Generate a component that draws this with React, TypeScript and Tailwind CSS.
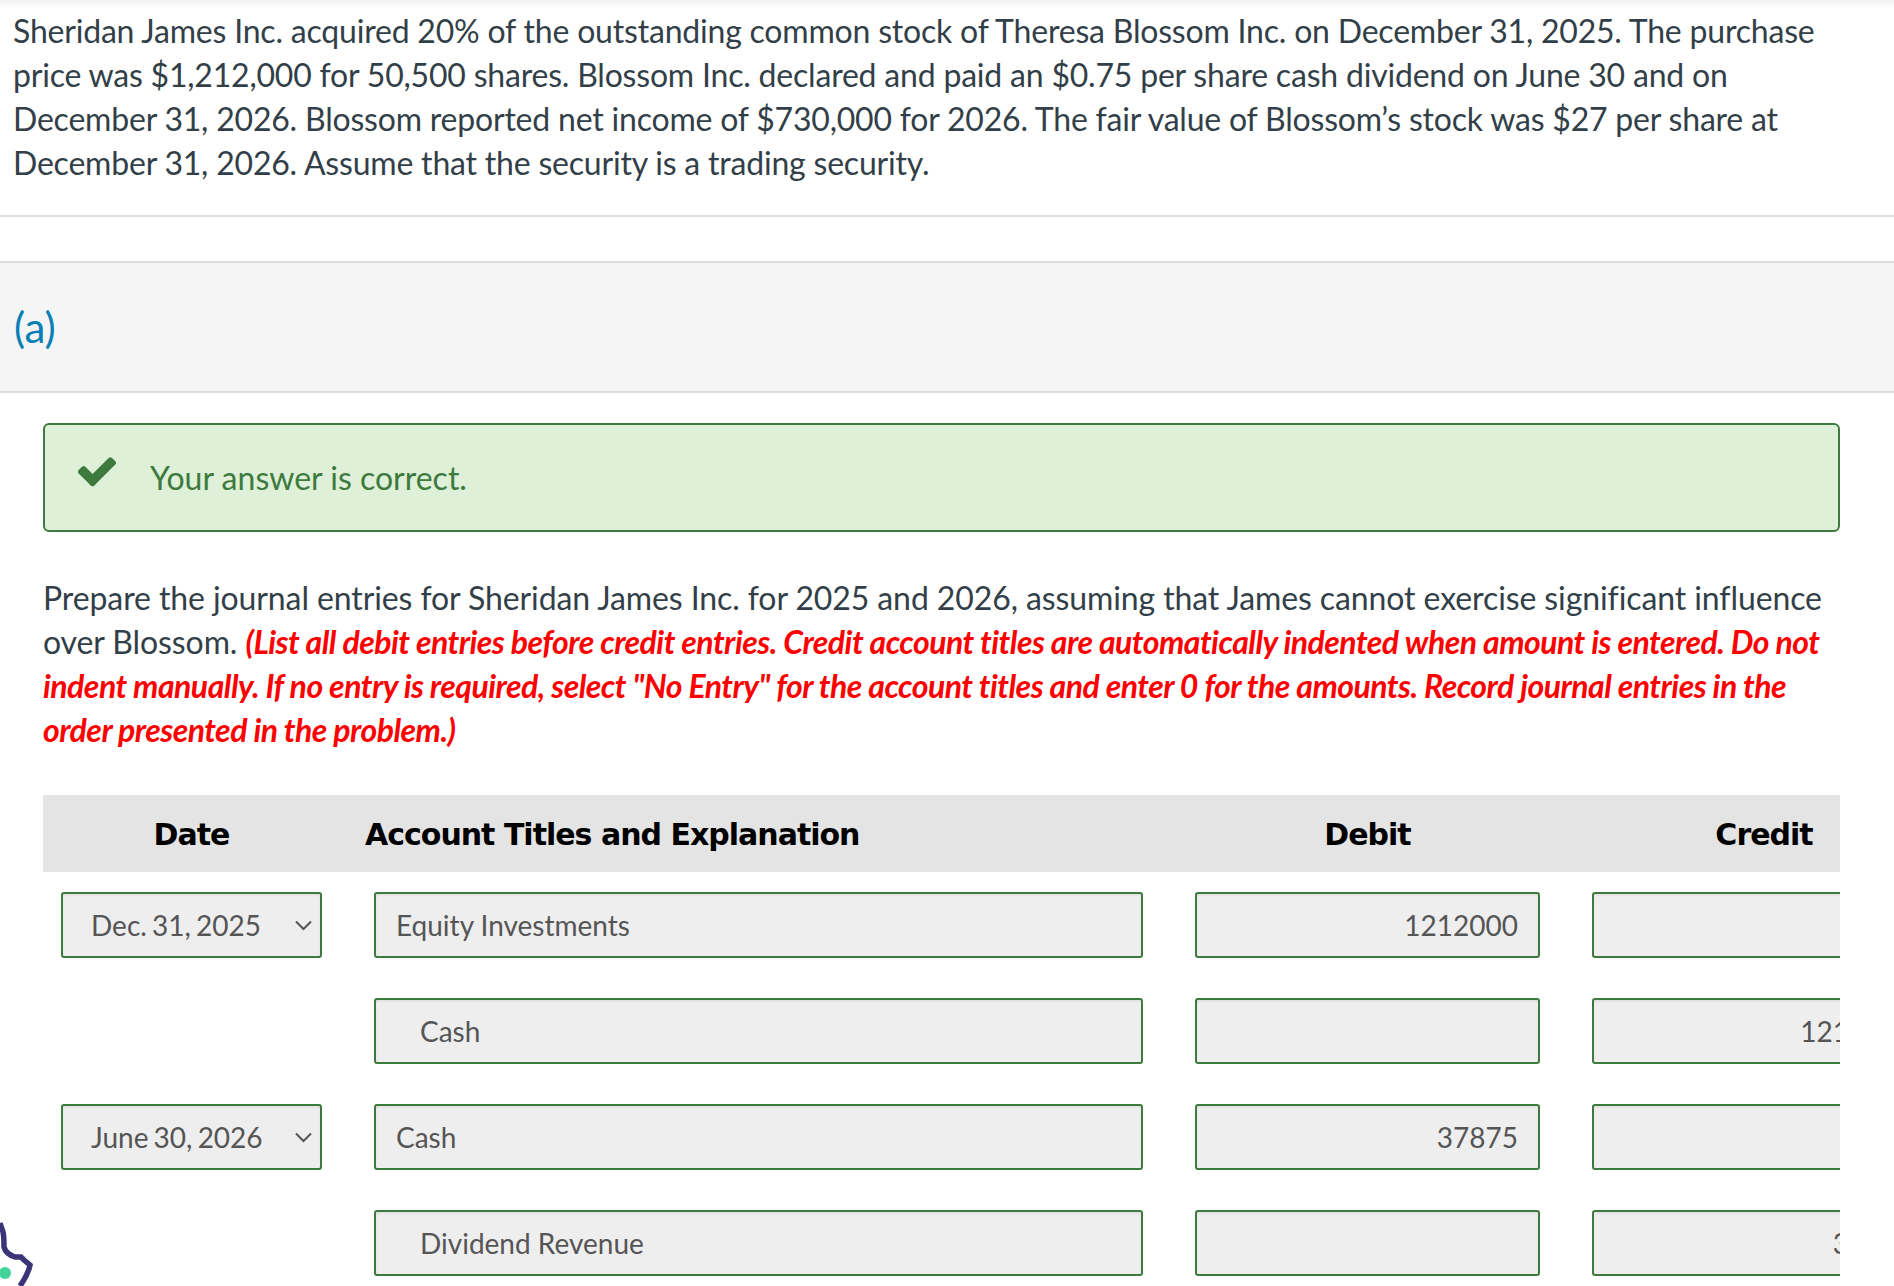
const FONT = "font-['Lato','Noto_Sans',sans-serif]"

const rows = [
  { date: "Dec. 31, 2025", account: "Equity Investments", debit: "1212000", credit: "" },
  { date: "", account: "Cash", debit: "", credit: "1212000" },
  { date: "June 30, 2026", account: "Cash", debit: "37875", credit: "" },
  { date: "", account: "Dividend Revenue", debit: "", credit: "37875" },
]

const FIELD =
  "h-[66px] border-2 border-[#3e7a3e] bg-[#eeeeee] rounded-[3px] text-[#555555] text-[28px] outline-none shadow-[inset_0_2px_2px_rgba(0,0,0,0.05)]"

function DateSelect({ value }: { value: string }) {
  if (!value) return <div className="w-[261px] shrink-0" />
  return (
    <div className={`${FIELD} w-[261px] shrink-0 flex items-center justify-between pl-[28px] pr-[8px]`}>
      <span className="[word-spacing:-2px]">{value}</span>
      <svg width="17" height="11" viewBox="0 0 17 11" fill="none" stroke="#555555" strokeWidth="2">
        <path d="M1 1.5 L8.5 9 L16 1.5" />
      </svg>
    </div>
  )
}

export default function App() {
  return (
    <div className={`relative h-[1286px] overflow-hidden bg-white ${FONT} text-[#333f48]`}>
      {/* top shadow */}
      <div className="h-[9px] bg-gradient-to-b from-[#f2f2f2] to-white" />

      <p className="pl-[13px] pr-[20px] text-[32px] leading-[44px] tracking-[-0.2px]">
        Sheridan James Inc. acquired 20% of the outstanding common stock of Theresa Blossom Inc. on December 31, 2025. The purchase
        price was $1,212,000 for 50,500 shares. Blossom Inc. declared and paid an $0.75 per share cash dividend on June 30 and on
        December 31, 2026. Blossom reported net income of $730,000 for 2026. The fair value of Blossom’s stock was $27 per share at
        December 31, 2026. Assume that the security is a trading security.
      </p>

      <div className="mt-[30px] border-t-2 border-[#dddddd]" />

      {/* Part heading */}
      <div className="mt-[44px] h-[132px] flex items-center border-y-2 border-[#dddddd] bg-[#f5f5f5] px-[14px]">
        <span className="text-[42px] text-[#0a7fb5]">(a)</span>
      </div>

      {/* Correct answer alert */}
      <div className="mx-[43px] w-[1797px] mt-[30px] h-[109px] flex items-center border-2 border-[#3e7a3e] rounded-[6px] bg-[#dff0d8] text-[#3e7a3e]">
        <svg className="ml-[30px] mb-[14px] w-[44px] h-[44px]" viewBox="0 0 1792 1792" fill="#3e7a3e">
          <path d="M1671 566q0 40-28 68l-724 724-136 136q-28 28-68 28t-68-28l-136-136-362-362q-28-28-28-68t28-68l136-136q28-28 68-28t68 28l294 295 656-657q28-28 68-28t68 28l136 136q28 28 28 68z" />
        </svg>
        <span className="ml-[31px] text-[32px]">Your answer is correct.</span>
      </div>

      <p className="mx-[43px] w-[1810px] mt-[44px] text-[32px] leading-[44px] tracking-[-0.1px]">
        Prepare the journal entries for Sheridan James Inc. for 2025 and 2026, assuming that James cannot exercise significant influence
        over Blossom.{" "}
        <span className="font-bold italic text-[#ff0000] tracking-[-0.53px]">
          (List all debit entries before credit entries. Credit account titles are automatically indented when amount is entered. Do not
          indent manually. If no entry is required, select "No Entry" for the account titles and enter 0 for the amounts. Record journal entries in the
          order presented in the problem.)
        </span>
      </p>

      {/* Journal table */}
      <div className="ml-[43px] w-[1797px] mt-[43px] overflow-hidden">
        <div className="h-[77px] flex items-center gap-[52px] pl-[18px] pt-[2px] bg-[#e4e4e4] text-black font-['DejaVu_Sans',sans-serif] font-bold text-[30px] tracking-[-1px]">
          <div className="w-[261px] shrink-0 text-center">Date</div>
          <div className="w-[769px] shrink-0 -ml-[9px] mr-[9px]">Account Titles and Explanation</div>
          <div className="w-[345px] shrink-0 text-center">Debit</div>
          <div className="w-[344px] shrink-0 text-center">Credit</div>
        </div>

        <div className="pt-[20px] flex flex-col gap-[40px]">
          {rows.map((r, i) => (
            <div key={i} className="flex gap-[52px] pl-[18px]">
              <DateSelect value={r.date} />
              <div className={`${FIELD} w-[769px] shrink-0 flex items-center ${r.date ? "pl-[20px]" : "pl-[44px]"}`}>
                {r.account}
              </div>
              <div className={`${FIELD} w-[345px] shrink-0 flex items-center justify-end pr-[20px]`}>{r.debit}</div>
              <div className={`${FIELD} w-[344px] shrink-0 flex items-center justify-end pr-[20px]`}>{r.credit}</div>
            </div>
          ))}
        </div>
      </div>

      {/* floating help widget, mostly off screen */}
      <svg className="absolute left-0 bottom-0 w-[34px] h-[64px]" viewBox="0 0 34 64" fill="none">
        <path
          d="M0 1 L3 10 C4 14 4 20 4 25 C5 29 9 33 15 35 L21 35 L24 38 L30 43 C29 48 25 57 20 64"
          stroke="#3b3578"
          strokeWidth="5.5"
        />
        <circle cx="5" cy="51" r="6" fill="#43d49a" />
      </svg>
    </div>
  )
}
